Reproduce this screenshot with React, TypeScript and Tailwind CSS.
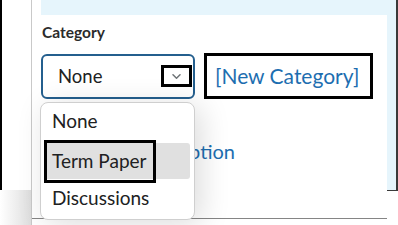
import React from "react";

export default function App() {
  return (
    <div className="relative flex w-[398px] h-[225px] overflow-hidden bg-white font-['Lato','Liberation_Sans',sans-serif]">
      {/* left gutter */}
      <div className="flex w-[31px] flex-col">
        <div className="h-[190px] border-l-2 border-black bg-white" />
        <div className="flex-1 bg-gradient-to-r from-white to-[#dedede]" />
      </div>
      <div className="w-px bg-[#c9c9c9]" />

      {/* main */}
      <div className="flex w-[355px] flex-col">
        <div className="ml-[9px] h-[15px] bg-[#e6f5fc]" />
        <div className="flex flex-1 flex-col pl-[9px]">
          <div className="mt-[8px] pl-px text-[15.5px] font-bold leading-[18px] text-[#2b2b2b]">
            Category
          </div>
          <div className="mt-[12px] flex items-center">
            <div className="flex h-[45px] w-[154px] items-center rounded-[6px] border-2 border-[#245f8e] pl-[15px] pr-px">
              <span className="flex-1 text-[18.5px] leading-[22px] text-[#202122]">None</span>
              <div className="flex h-[22px] w-[31px] items-center justify-center border-[3px] border-black">
                <svg width="9" height="5" viewBox="0 0 9 5">
                  <path d="M1 0.8l3.5 3.4L8 0.8" fill="none" stroke="#6e7376" strokeWidth="1.5" strokeLinecap="round" strokeLinejoin="round" />
                </svg>
              </div>
            </div>
            <div className="ml-[9px] flex h-[46px] w-[169px] items-center border-[3px] border-black pl-[8px]">
              <span className="text-[21px] leading-[24px] text-[#1d6eb0]">[New Category]</span>
            </div>
          </div>
          <div className="mt-[40px] w-[194px] text-right text-[20px] leading-[24px] text-[#1d6eb0]">
            Add Description
          </div>
        </div>
        <div className="h-px bg-[#858585]" />
        <div className="h-[6px]" />
      </div>

      {/* right strip */}
      <div className="flex w-[11px] flex-col">
        <div className="h-[191px] border-b border-r-2 border-[#3a3a3a] bg-[#e6f5fc]" />
      </div>

      {/* dropdown menu overlay */}
      <div className="absolute left-[40px] top-[102px] w-[155px] rounded-[8px] border border-[#cfcfcf] bg-white px-[3px] pb-[3px] shadow-[6px_4px_30px_rgba(0,0,0,0.14)]">
        <div className="mb-[4px] h-[36px] pl-[8px] text-[19px] leading-[36px] text-[#202122]">None</div>
        <div className="relative mb-px mr-px h-[36px] rounded-[3px] bg-[#e0e0e0] pl-[8px] text-[19px] leading-[36px] text-[#202122]">
          Term Paper
          <div className="absolute -top-[3px] left-0 h-[43px] w-[112px] border-[3px] border-black" />
        </div>
        <div className="h-[36px] pl-[8px] text-[19px] leading-[36px] text-[#202122]">Discussions</div>
      </div>
    </div>
  );
}
